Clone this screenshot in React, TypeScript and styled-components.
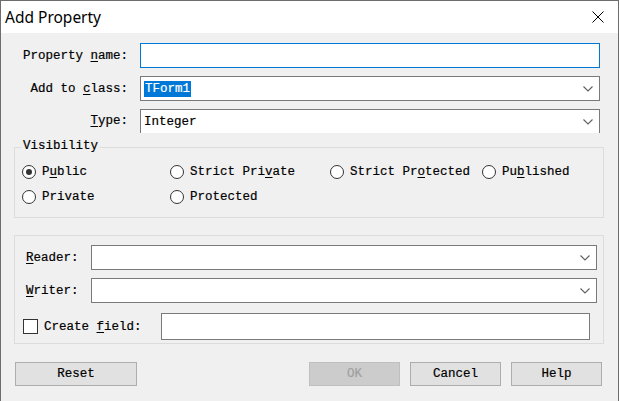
import React from "react";
import styled, { createGlobalStyle } from "styled-components";

const Global = createGlobalStyle`
  html, body { margin: 0; padding: 0; background: #ffffff; }
  * { box-sizing: border-box; }
`;

const BODY_FONT = `"Liberation Mono", "DejaVu Sans Mono", monospace`;

const Window = styled.div`
  width: 619px;
  height: 401px;
  border: 1px solid #6d6d6d;
  border-bottom: none;
  display: flex;
  flex-direction: column;
  background: #f0f0f0;
  overflow: hidden;
`;

const TitleBar = styled.div`
  height: 32px;
  background: #ffffff;
  display: flex;
  align-items: center;
  justify-content: space-between;
  padding: 0 14px 0 4px;
  font-family: "Noto Sans", "Open Sans", sans-serif;
  font-size: 15.5px;
  color: #000;
`;

const Body = styled.div`
  flex: 1;
  padding: 10px 0 0 13px;
  font-family: ${BODY_FONT};
  font-size: 12.5px;
  -webkit-text-stroke: 0.2px #000;
  color: #000;
  display: flex;
  flex-direction: column;
`;

const FormGrid = styled.div`
  display: grid;
  grid-template-columns: 114px 460px;
  column-gap: 12px;
  row-gap: 8px;
  align-items: center;
`;

const Label = styled.label<{ $align?: "left" | "right" }>`
  text-align: ${(p) => p.$align ?? "right"};
  white-space: pre;
`;

const U = styled.span`
  text-decoration: underline;
  text-underline-offset: 2px;
`;

const TextInput = styled.div<{ $focused?: boolean; $w?: number; $h?: number }>`
  height: ${(p) => p.$h ?? 25}px;
  width: ${(p) => (p.$w ? `${p.$w}px` : "auto")};
  background: #fff;
  border: 1px solid ${(p) => (p.$focused ? "#0078d7" : "#7a7a7a")};
`;

const Combo = styled.div<{ $w?: number; $h?: number; $cut?: boolean }>`
  height: ${(p) => p.$h ?? 25}px;
  width: ${(p) => (p.$w ? `${p.$w}px` : "auto")};
  background: #fff;
  border: 1px solid #7a7a7a;
  border-bottom: ${(p) => (p.$cut ? "none" : "1px solid #7a7a7a")};
  display: flex;
  align-items: center;
  padding: 0 6px 0 3px;
`;

const ComboText = styled.span`
  flex: 1;
  white-space: pre;
`;

const Selected = styled.span`
  background: #0078d7;
  color: #fff;
  -webkit-text-stroke: 0.2px #fff;
  padding: 1px 1px;
`;

const Chevron = () => (
  <svg width="10" height="6" viewBox="0 0 10 6">
    <polyline points="0.5,0.5 5,5 9.5,0.5" fill="none" stroke="#606060" strokeWidth="1.1" />
  </svg>
);

const Group = styled.div<{ $h: number; $mt: number }>`
  position: relative;
  width: 590px;
  height: ${(p) => p.$h}px;
  margin-top: ${(p) => p.$mt}px;
  border: 1px solid #dcdcdc;
`;

const Legend = styled.span`
  position: absolute;
  top: -9px;
  left: 6px;
  padding: 0 2px;
  background: #f0f0f0;
`;

const RadioGrid = styled.div`
  display: grid;
  grid-template-columns: 148px 160px 152px auto;
  grid-auto-rows: 25px;
  padding: 11px 0 0 7px;
  align-items: center;
`;

const RadioItem = styled.div`
  display: flex;
  align-items: center;
  gap: 6px;
  white-space: pre;
`;

const RadioCircle = styled.span<{ $checked?: boolean }>`
  width: 14px;
  height: 14px;
  border-radius: 50%;
  border: 1px solid #333;
  background: #fff;
  display: flex;
  align-items: center;
  justify-content: center;
  &::after {
    content: "";
    width: 6px;
    height: 6px;
    border-radius: 50%;
    background: ${(p) => (p.$checked ? "#333" : "transparent")};
  }
`;

const Radio = ({ checked, children }: { checked?: boolean; children: React.ReactNode }) => (
  <RadioItem>
    <RadioCircle $checked={checked} />
    <span>{children}</span>
  </RadioItem>
);

const AccessGrid = styled.div`
  display: grid;
  grid-template-columns: 65px 506px;
  row-gap: 8px;
  padding: 9px 0 0 11px;
  align-items: center;
`;

const FieldRow = styled.div`
  display: flex;
  align-items: center;
  margin-top: 10px;
  padding-left: 8px;
`;

const Check = styled.span`
  width: 15px;
  height: 15px;
  border: 1px solid #333;
  background: #fff;
  margin-right: 6px;
`;

const FieldLabel = styled.span`
  width: 117px;
  white-space: pre;
`;

const ButtonRow = styled.div`
  display: flex;
  align-items: center;
  margin-top: 18px;
  padding-left: 1px;
`;

const Button = styled.div<{ $w: number; $disabled?: boolean; $ml?: number }>`
  width: ${(p) => p.$w}px;
  height: 24px;
  margin-left: ${(p) => p.$ml ?? 0}px;
  display: flex;
  align-items: center;
  justify-content: center;
  background: ${(p) => (p.$disabled ? "#cccccc" : "#e1e1e1")};
  border: 1px solid ${(p) => (p.$disabled ? "#bfbfbf" : "#adadad")};
  color: ${(p) => (p.$disabled ? "#a0a0a0" : "#000")};
  -webkit-text-stroke: 0.2px ${(p) => (p.$disabled ? "#a0a0a0" : "#000")};
`;

const Close = () => (
  <svg width="12" height="12" viewBox="0 0 12 12">
    <path d="M0.5 0.5 L11.5 11.5 M11.5 0.5 L0.5 11.5" stroke="#000" strokeWidth="1" />
  </svg>
);

export default function App() {
  return (
    <>
      <Global />
      <Window>
        <TitleBar>
          <span>Add Property</span>
          <Close />
        </TitleBar>
        <Body>
          <FormGrid>
            <Label>Property <U>n</U>ame:</Label>
            <TextInput $focused />
            <Label>Add to <U>c</U>lass:</Label>
            <Combo>
              <ComboText>
                <Selected>TForm1</Selected>
              </ComboText>
              <Chevron />
            </Combo>
            <Label>
              <U>T</U>ype:
            </Label>
            <Combo $h={24} $cut>
              <ComboText>Integer</ComboText>
              <Chevron />
            </Combo>
          </FormGrid>

          <Group $h={71} $mt={14}>
            <Legend>Visibility</Legend>
            <RadioGrid>
              <Radio checked>
                P<U>u</U>blic
              </Radio>
              <Radio>
                Strict Pri<U>v</U>ate
              </Radio>
              <Radio>
                Strict Pr<U>o</U>tected
              </Radio>
              <Radio>
                Pu<U>b</U>lished
              </Radio>
              <Radio>Private</Radio>
              <Radio>Protected</Radio>
            </RadioGrid>
          </Group>

          <Group $h={109} $mt={17}>
            <AccessGrid>
              <Label $align="left">
                <U>R</U>eader:
              </Label>
              <Combo>
                <ComboText />
                <Chevron />
              </Combo>
              <Label $align="left">
                <U>W</U>riter:
              </Label>
              <Combo>
                <ComboText />
                <Chevron />
              </Combo>
            </AccessGrid>
            <FieldRow>
              <Check />
              <FieldLabel>
                Create <U>f</U>ield:
              </FieldLabel>
              <TextInput $w={429} $h={27} />
            </FieldRow>
          </Group>

          <ButtonRow>
            <Button $w={122}>Reset</Button>
            <Button $w={91} $disabled $ml={172}>
              OK
            </Button>
            <Button $w={91} $ml={10}>
              Cancel
            </Button>
            <Button $w={91} $ml={10}>
              Help
            </Button>
          </ButtonRow>
        </Body>
      </Window>
    </>
  );
}
